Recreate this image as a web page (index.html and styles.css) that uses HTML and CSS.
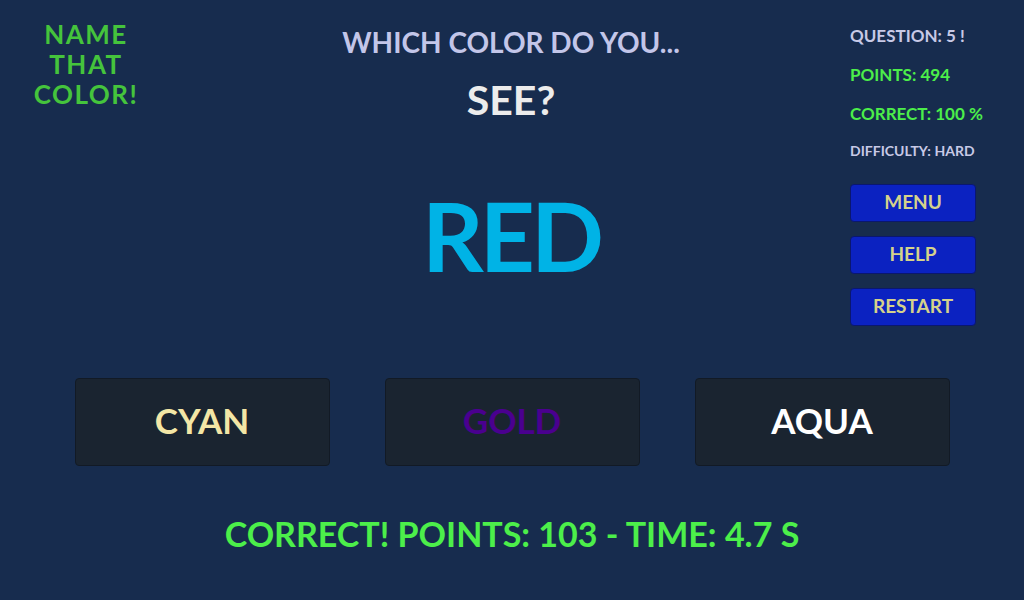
FILE: index.html
```html
<!DOCTYPE html>
<html lang="en">
<head>
    <meta charset="UTF-8">
    <meta name="viewport" content="width=device-width, initial-scale=1.0">
    <title>Name That Color!</title>
    <link rel="stylesheet" href="styles.css">
</head>
<body>
    <div class="game">
        <div class="top">
            <!-- Logo -->
            <div class="logo">NAME<br>THAT<br>COLOR!</div>

            <!-- Question -->
            <div class="question">
                <div class="ask">WHICH COLOR DO YOU...</div>
                <div class="see">SEE?</div>
                <div class="word">RED</div>
            </div>

            <!-- Stats and menu -->
            <div class="side">
                <div class="stat stat-q">QUESTION: 5 !</div>
                <div class="stat stat-green">POINTS: 494</div>
                <div class="stat stat-green">CORRECT: 100 %</div>
                <div class="stat stat-small">DIFFICULTY: HARD</div>
                <div class="menu">
                    <button class="menu-btn">MENU</button>
                    <button class="menu-btn">HELP</button>
                    <button class="menu-btn">RESTART</button>
                </div>
            </div>
        </div>

        <div class="answers">
            <button class="answer answer-cyan">CYAN</button>
            <button class="answer answer-gold">GOLD</button>
            <button class="answer answer-aqua">AQUA</button>
        </div>

        <div class="result">CORRECT! POINTS: 103 - TIME: 4.7 S</div>
    </div>
</body>
</html>
```

FILE: styles.css
```css
body {
    margin: 0;
    background-color: #172c4e;
    font-family: 'Lato', 'Open Sans', sans-serif;
    font-weight: bold;
}

.game {
    width: 1024px;
    height: 600px;
    display: flex;
    flex-direction: column;
}

.top {
    display: grid;
    grid-template-columns: 172px 1fr 174px;
    height: 338px;
}

/* Logo */
.logo {
    color: #45c43c;
    font-size: 26px;
    line-height: 30px;
    letter-spacing: 1.5px;
    text-align: center;
    padding-top: 19px;
}

/* Question area */
.question {
    display: flex;
    flex-direction: column;
    align-items: center;
}

.ask {
    color: #c3c6e9;
    font-size: 28px;
    margin-top: 24px;
    line-height: 36px;
}

.see {
    color: #ececec;
    font-size: 41px;
    margin-top: 16px;
    line-height: 48px;
}

.word {
    color: #00b3e6;
    font-size: 96px;
    line-height: 110px;
    letter-spacing: -4px;
    margin-top: 56px;
}

/* Right side */
.side {
    padding-top: 24px;
}

.stat {
    font-size: 17px;
    line-height: 24px;
    height: 39px;
}

.stat-q {
    color: #c7c9e6;
}

.stat-green {
    color: #4cee4a;
}

.stat-small {
    color: #c7c9e6;
    font-size: 14px;
    line-height: 20px;
    height: 43px;
}

.menu {
    display: flex;
    flex-direction: column;
    gap: 14px;
}

.menu-btn {
    width: 126px;
    height: 38px;
    background-color: #0b22c1;
    border: 1px solid #0a1770;
    border-radius: 4px;
    color: #d5d28b;
    font-family: inherit;
    font-weight: bold;
    font-size: 19px;
    padding: 0 0 3px;
}

/* Answer buttons */
.answers {
    display: flex;
    justify-content: center;
    gap: 55px;
    margin-top: 40px;
}

.answer {
    width: 255px;
    height: 88px;
    background-color: #1a2430;
    border: 1px solid #121a25;
    border-radius: 4px;
    font-family: inherit;
    font-weight: bold;
    font-size: 35px;
    padding: 0 0 5px;
}

.answer-cyan {
    color: #f3e6a6;
}

.answer-gold {
    color: #4a008f;
}

.answer-aqua {
    color: #ffffff;
}

/* Result line */
.result {
    color: #4cef4a;
    font-size: 34px;
    text-align: center;
    margin-top: 47px;
}
```
